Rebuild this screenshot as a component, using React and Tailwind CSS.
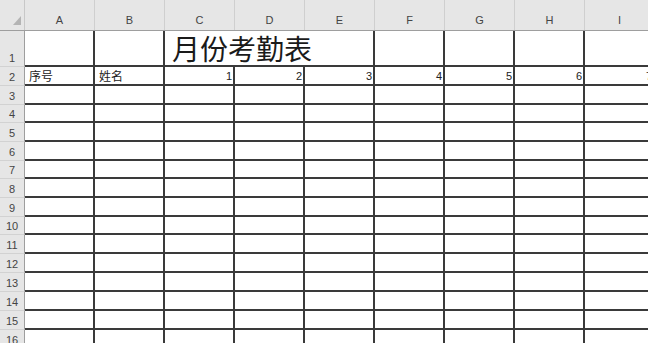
const cols = ['A', 'B', 'C', 'D', 'E', 'F', 'G', 'H', 'I'];
const rowHeights = [36, 19, 19, 18, 19, 19, 18, 19, 19, 18, 19, 19, 19, 19, 19, 19];
const rowClass = {
    36: 'h-[36px]',
    19: 'h-[19px]',
    18: 'h-[18px]',
};

const RowHead = ({ n, h }) => (
    <div className={`w-[25px] shrink-0 ${rowClass[h]} bg-[#e6e6e6] border-b border-b-[#d2d2d2] border-r border-r-[#9e9e9e] flex items-end justify-center text-[11px] leading-[15px] text-[#444]`}>
        {n}
    </div>
);

const Cell = ({ children, right, wide }) => (
    <div className={`${wide ? 'w-[210px]' : 'w-[70px]'} shrink-0 h-full border-r-2 border-b-2 border-[#3a3a3a] flex items-end ${right ? 'justify-end pr-[1px]' : 'pl-[4px]'}`}>
        {children}
    </div>
);

export default function App() {
    return (
        <div className="w-[648px] h-[343px] overflow-hidden bg-white font-['Liberation_Sans','Noto_Sans_CJK_SC',sans-serif]">
            {/* column headers */}
            <div className="flex h-[31px] bg-[#e6e6e6] border-b border-[#9e9e9e]">
                <div className="w-[25px] shrink-0 relative border-r border-[#c8c8c8]">
                    <svg className="absolute left-[13px] top-[16px]" width="8" height="9" viewBox="0 0 8 9">
                        <polygon points="8,0 8,9 0,9" fill="#b4b4b4" />
                    </svg>
                </div>
                {cols.map((c) => (
                    <div key={c} className="w-[70px] shrink-0 border-r border-[#cfcfcf] flex items-end justify-center pb-[4px] text-[11px] leading-[12px] text-[#444]">
                        {c}
                    </div>
                ))}
            </div>

            {/* row 1 */}
            <div className="flex h-[36px]">
                <RowHead n={1} h={36} />
                <Cell />
                <Cell />
                <Cell wide>
                    <span className="font-['Noto_Sans_CJK_SC',sans-serif] text-[28px] leading-[34px] text-[#1a1a1a] pl-[3px]">月份考勤表</span>
                </Cell>
                <Cell />
                <Cell />
                <Cell />
                <Cell />
            </div>

            {/* row 2 */}
            <div className="flex h-[19px]">
                <RowHead n={2} h={19} />
                <Cell>
                    <span className="font-['Noto_Sans_CJK_SC',sans-serif] text-[12px] leading-[17px] text-[#222]">序号</span>
                </Cell>
                <Cell>
                    <span className="font-['Noto_Sans_CJK_SC',sans-serif] text-[12px] leading-[17px] text-[#222]">姓名</span>
                </Cell>
                {[1, 2, 3, 4, 5, 6, 7].map((d) => (
                    <Cell key={d} right>
                        <span className="text-[11px] leading-[16px] text-[#222]">{d}</span>
                    </Cell>
                ))}
            </div>

            {/* empty rows */}
            {rowHeights.slice(2).map((h, i) => (
                <div key={i} className={`flex ${rowClass[h]}`}>
                    <RowHead n={i + 3} h={h} />
                    {cols.map((c) => (
                        <Cell key={c} />
                    ))}
                </div>
            ))}
        </div>
    );
}
